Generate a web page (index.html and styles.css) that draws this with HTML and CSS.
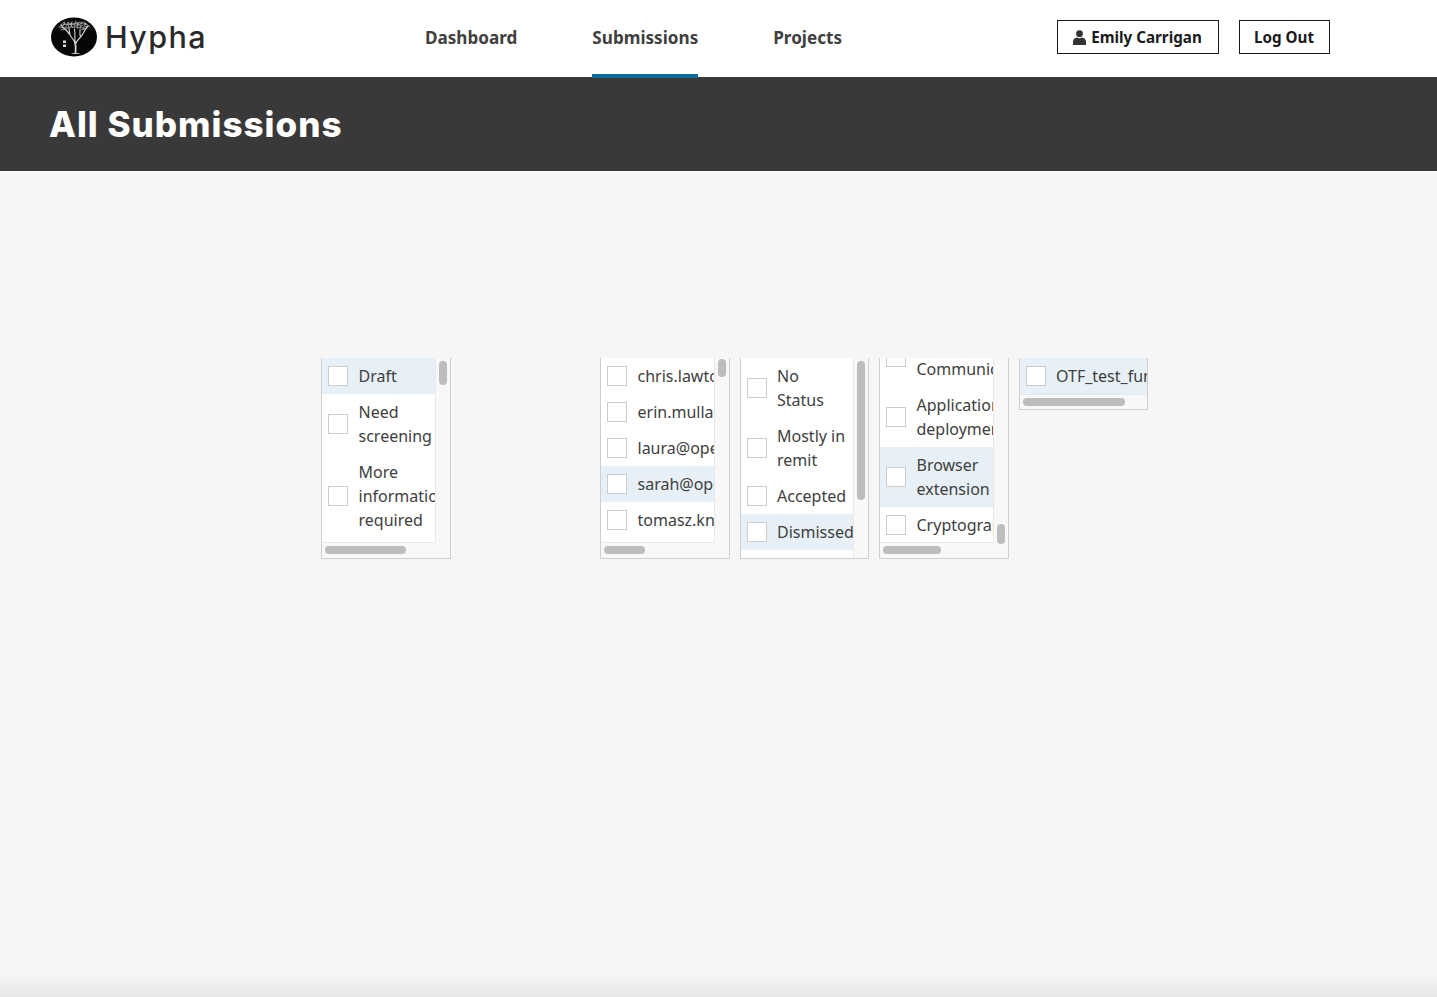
FILE: index.html
```html
<!DOCTYPE html>
<html lang="en">
<head>
<meta charset="utf-8">
<title>All Submissions</title>
<link rel="stylesheet" href="styles.css">
</head>
<body>
<header class="topbar">
  <a class="brand" href="#">
    <svg class="brand-mark" viewBox="0 0 46 40" aria-hidden="true">
      <ellipse cx="23" cy="20" rx="23" ry="19.500" fill="#070707"/>
      <g fill="none" stroke="#d8d8d8" stroke-linecap="round">
        <path stroke-width="1.700" d="M24.500 36c.5-4 .2-8-.5-11"/>
        <path stroke-width="1.100" d="M24 26c-1-3-3-5-5-8s-3-4-5-6M24.500 27c1-3 3-5 5-7s3-4 4-6M24 25c-.5-4 .5-8-.5-13M19 18c0-2-1-4-1-7M29.500 20c-1-2-.5-4-.5-7M14 12c-2-1-3-2-4-4M33.500 14c1-2 2-3 3-5"/>
        <path stroke-width=".7" opacity=".85" d="M10 8l3-3M12 9l2-4M14 11l4-6M16 8l-3-2M18 11l-1-6M18 8l3-3M20 10l1-5M22 11l-3-4M23.500 10l1-6M25 9l3-4M27 12l-1-7M27 8l4-2M29 12l2-7M31 9l3-2M32 12l3-6M34 10l4-1M35 8l-2-3M9 11l4-1M12 13l4-1M30 13l5-1M37 11l-2-1M20 7l4 1M26 7l4 2"/>
        <path stroke-width=".8" opacity=".8" d="M8 10c4-3 8-3 12-3s8-2 12-1 5 2 7 4M10 13c3-2 7-3 11-3s9 0 14 2"/>
        <path stroke-width=".8" d="M21 36.500h7"/>
      </g>
      <path fill="#d6d6d6" d="M12 23.500h3v2.500h-3zM12 27.500h3v2.500h-3z"/>
    </svg>
    <span class="brand-name">Hypha</span>
  </a>
  <nav class="mainnav">
    <a class="navlink" href="#">Dashboard</a>
    <a class="navlink is-active" href="#">Submissions</a>
    <a class="navlink" href="#">Projects</a>
  </nav>
  <div class="account">
    <a class="btn" href="#">
      <svg class="btn-icon" viewBox="0 0 13 15" aria-hidden="true"><circle cx="6.500" cy="3.700" r="3.400" fill="#333"/><path fill="#333" d="M0 15v-3.200C0 9.300 1.900 7.800 3.800 7.500c1.600 1 3.800 1 5.400 0 1.900.3 3.800 1.800 3.800 4.300V15z"/></svg>
      Emily Carrigan
    </a>
    <a class="btn btn-logout" href="#">Log Out</a>
  </div>
</header>
<section class="hero"><h1 class="hero-title">All Submissions</h1></section>
<main class="content">
  <div class="filters">
    <div class="panel">
      <div class="list">
        <div class="rows">
          <div class="row is-selected"><span class="check"></span><span class="label">Draft</span></div>
          <div class="row"><span class="check"></span><span class="label">Need screening</span></div>
          <div class="row"><span class="check"></span><span class="label">More information required</span></div>
        </div>
      </div>
      <div class="vtrack vtrack-a"><span class="vthumb vthumb-a"></span></div>
      <div class="htrack"><span class="hthumb hthumb-a"></span></div>
    </div>

    <div class="panel-spacer"></div>

    <div class="panel">
      <div class="list">
        <div class="rows">
          <div class="row"><span class="check"></span><span class="label label-nowrap">chris.lawton@opentech.fund</span></div>
          <div class="row"><span class="check"></span><span class="label label-nowrap">erin.mullaney@opentech.fund</span></div>
          <div class="row"><span class="check"></span><span class="label label-nowrap">laura@opentech.fund</span></div>
          <div class="row is-selected"><span class="check"></span><span class="label label-nowrap">sarah@opentech.fund</span></div>
          <div class="row"><span class="check"></span><span class="label label-nowrap">tomasz.knop@opentech.fund</span></div>
        </div>
      </div>
      <div class="vtrack vtrack-b"><span class="vthumb vthumb-b"></span></div>
      <div class="htrack"><span class="hthumb hthumb-b"></span></div>
    </div>

    <div class="panel panel-noh">
      <div class="list">
        <div class="rows">
          <div class="row"><span class="check"></span><span class="label">No<br>Status</span></div>
          <div class="row"><span class="check"></span><span class="label">Mostly in remit</span></div>
          <div class="row"><span class="check"></span><span class="label">Accepted</span></div>
          <div class="row is-selected"><span class="check"></span><span class="label">Dismissed</span></div>
        </div>
      </div>
      <div class="vtrack vtrack-c"><span class="vthumb vthumb-c"></span></div>
    </div>

    <div class="panel">
      <div class="list">
        <div class="rows rows-scrolled">
          <div class="row"><span class="check"></span><span class="label">Secure Communications</span></div>
          <div class="row"><span class="check"></span><span class="label">Application deployment</span></div>
          <div class="row is-selected"><span class="check"></span><span class="label">Browser extension</span></div>
          <div class="row"><span class="check"></span><span class="label label-nowrap">Cryptography</span></div>
        </div>
      </div>
      <div class="vtrack vtrack-d"><span class="vthumb vthumb-d"></span></div>
      <div class="htrack"><span class="hthumb hthumb-d"></span></div>
    </div>

    <div class="panel panel-short">
      <div class="list list-rule">
        <div class="rows">
          <div class="row is-selected"><span class="check"></span><span class="label label-nowrap">OTF_test_fund</span></div>
        </div>
      </div>
      <div class="htrack"><span class="hthumb hthumb-e"></span></div>
    </div>
  </div>
</main>
<div class="page-shade"></div>
</body>
</html>
```

FILE: styles.css
```css
* { box-sizing: border-box; }
html, body { margin: 0; height: 100%; }
body {
  position: relative;
  height: 997px;
  overflow: hidden;
  background: #f6f6f6;
  color: #404040;
  font-family: "Noto Sans", sans-serif;
  font-size: 16px;
}
a { color: inherit; text-decoration: none; }

.topbar {
  display: flex;
  align-items: center;
  height: 77px;
  background: #fff;
  padding-left: 51px;
}
.brand { display: flex; align-items: center; width: 374px; height: 77px; padding-bottom: 3px; }
.brand-mark { display: block; width: 46px; height: 40px; filter: blur(.35px); }
.brand-name {
  margin-left: 8px;
  font-family: "Inter", sans-serif;
  font-size: 30.500px;
  font-weight: 500;
  line-height: 40px;
  letter-spacing: 1.400px;
  color: #2a2a2a;
}
.mainnav { display: flex; gap: 75px; height: 77px; }
.navlink {
  display: flex;
  align-items: center;
  height: 78px;
  border-bottom: 4px solid transparent;
  position: relative;
  z-index: 1;
  font-size: 17.120px;
  font-weight: 700;
  color: #404040;
}
.navlink.is-active { border-bottom-color: #0d6d99; }
.account { display: flex; gap: 20px; margin-left: 214.500px; margin-bottom: 3px; }
.btn {
  display: flex;
  align-items: center;
  justify-content: center;
  width: 162px;
  height: 34px;
  border: 1px solid #1a1a1a;
  background: #fff;
  color: #1a1a1a;
  font-size: 15.200px;
  font-weight: 700;
}
.btn-icon { width: 13px; height: 15px; margin-right: 5px; }
.btn-logout { width: 91px; }

.hero {
  display: flex;
  align-items: center;
  height: 94px;
  padding-left: 49px;
  background: #393939;
}
.hero-title {
  margin: 0;
  font-family: "Inter", sans-serif;
  font-size: 35px;
  font-weight: 800;
  letter-spacing: 1px;
  line-height: 1;
  color: #fff;
}

.content { padding: 187px 0 0 321px; }
.filters {
  display: grid;
  grid-template-columns: repeat(6, 129.500px);
  column-gap: 10px;
  align-items: start;
}
.panel {
  display: grid;
  grid-template-columns: 1fr 14px;
  grid-template-rows: 185px 15px;
  height: 201px;
  border: 1px solid #cfcfcf;
  border-top: 0;
  background: #f8f8f8;
  overflow: hidden;
}
.panel-noh { grid-template-rows: 200px; }
.panel-short { grid-template-columns: 1fr; grid-template-rows: 37px 15px; height: 52px; }
.list {
  min-width: 0;
  overflow: hidden;
  background: #fff;
  border-right: 1px solid #e8e8e8;
  border-bottom: 1px solid #e8e8e8;
}
.panel-noh .list { border-bottom: 0; }
.panel-short .list { border-right: 0; }
.rows-scrolled { margin-top: -31px; }
.row { display: flex; align-items: center; padding: 6px 0 6px 6px; }
.row.is-selected { background: #e7f0f6; }
.check {
  flex: none;
  width: 20px;
  height: 20px;
  margin-right: 10.500px;
  border: 1px solid #cccccc;
  background: #fff;
}
.label { min-width: 0; flex: 1; line-height: 24px; color: #404040; }
.label-nowrap { white-space: nowrap; }

.vtrack { display: flex; justify-content: center; padding-top: 3px; }
.vtrack-b { padding-top: 1px; }
.vtrack-d { padding-top: 166px; }
.vthumb { display: block; width: 8px; border-radius: 4px; background: #bdbdbd; }
.vthumb-a { height: 24px; }
.vthumb-b { height: 18px; }
.vthumb-c { height: 139px; }
.vthumb-d { height: 20px; }

.htrack { grid-column: 1 / -1; padding: 3px 3px 0; }
.hthumb { display: block; height: 8px; border-radius: 4px; background: #bdbdbd; }
.hthumb-a { width: 81px; }
.hthumb-b { width: 41px; }
.hthumb-d { width: 58px; }
.hthumb-e { width: 102px; }

.page-shade {
  position: absolute;
  left: 0;
  right: 0;
  bottom: 0;
  height: 24px;
  background: linear-gradient(to bottom, rgba(230,230,230,0), #e6e6e6);
}
```
